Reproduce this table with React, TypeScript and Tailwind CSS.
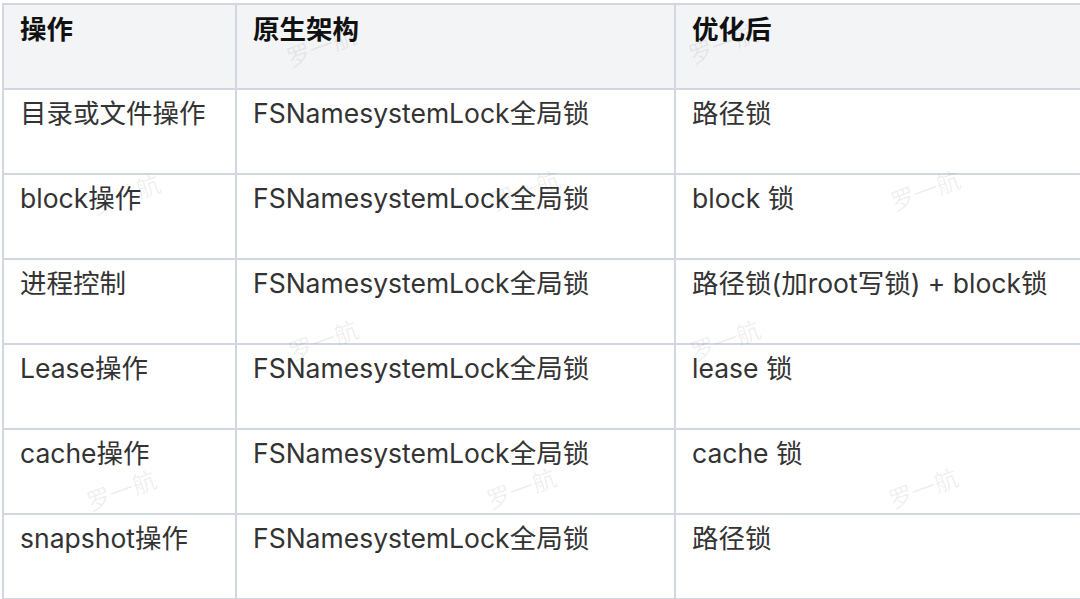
const ROWS = [
  ['目录或文件操作', 'FSNamesystemLock全局锁', '路径锁'],
  ['block操作', 'FSNamesystemLock全局锁', 'block 锁'],
  ['进程控制', 'FSNamesystemLock全局锁', '路径锁(加root写锁) + block锁'],
  ['Lease操作', 'FSNamesystemLock全局锁', 'lease 锁'],
  ['cache操作', 'FSNamesystemLock全局锁', 'cache 锁'],
  ['snapshot操作', 'FSNamesystemLock全局锁', '路径锁'],
]

// watermark spots, left/top of the text box
const MARKS = [
  { x: 288, y: 28 },
  { x: 690, y: 25 },
  { x: 92, y: 176 },
  { x: 492, y: 172 },
  { x: 892, y: 172 },
  { x: 290, y: 322 },
  { x: 692, y: 322 },
  { x: 88, y: 472 },
  { x: 488, y: 470 },
  { x: 890, y: 470 },
]

export default function App() {
  return (
    <div
      className="relative w-[1080px] h-[599px] overflow-hidden bg-white pl-[2px] pt-[3px]"
      style={{ fontFamily: 'Inter, "Noto Sans CJK SC", sans-serif' }}
    >
      <table className="table-fixed border-collapse w-[1140px] text-[26.5px] leading-[36px]">
        <colgroup>
          <col className="w-[233px]" />
          <col className="w-[439px]" />
          <col className="w-[468px]" />
        </colgroup>
        <thead>
          <tr className="h-[85px] bg-[#f3f4f6]">
            {['操作', '原生架构', '优化后'].map(h => (
              <th
                key={h}
                className="border-2 border-[#d2d7df] px-[16px] pt-[6px] align-top text-left font-bold text-[#111]"
              >
                {h}
              </th>
            ))}
          </tr>
        </thead>
        <tbody>
          {ROWS.map((row, i) => (
            <tr key={i} className="h-[85px]">
              {row.map((cell, j) => (
                <td
                  key={j}
                  className="border-2 border-[#d2d7df] px-[16px] pt-[5px] align-top text-[#333] whitespace-nowrap"
                >
                  {cell}
                </td>
              ))}
            </tr>
          ))}
        </tbody>
      </table>

      {MARKS.map((m, i) => (
        <span
          key={i}
          className="absolute pointer-events-none select-none text-[24px] leading-none text-[#000]/[0.07] -rotate-[20deg] origin-left"
          style={{ left: m.x, top: m.y + 20 }}
        >
          罗一航
        </span>
      ))}
    </div>
  )
}
